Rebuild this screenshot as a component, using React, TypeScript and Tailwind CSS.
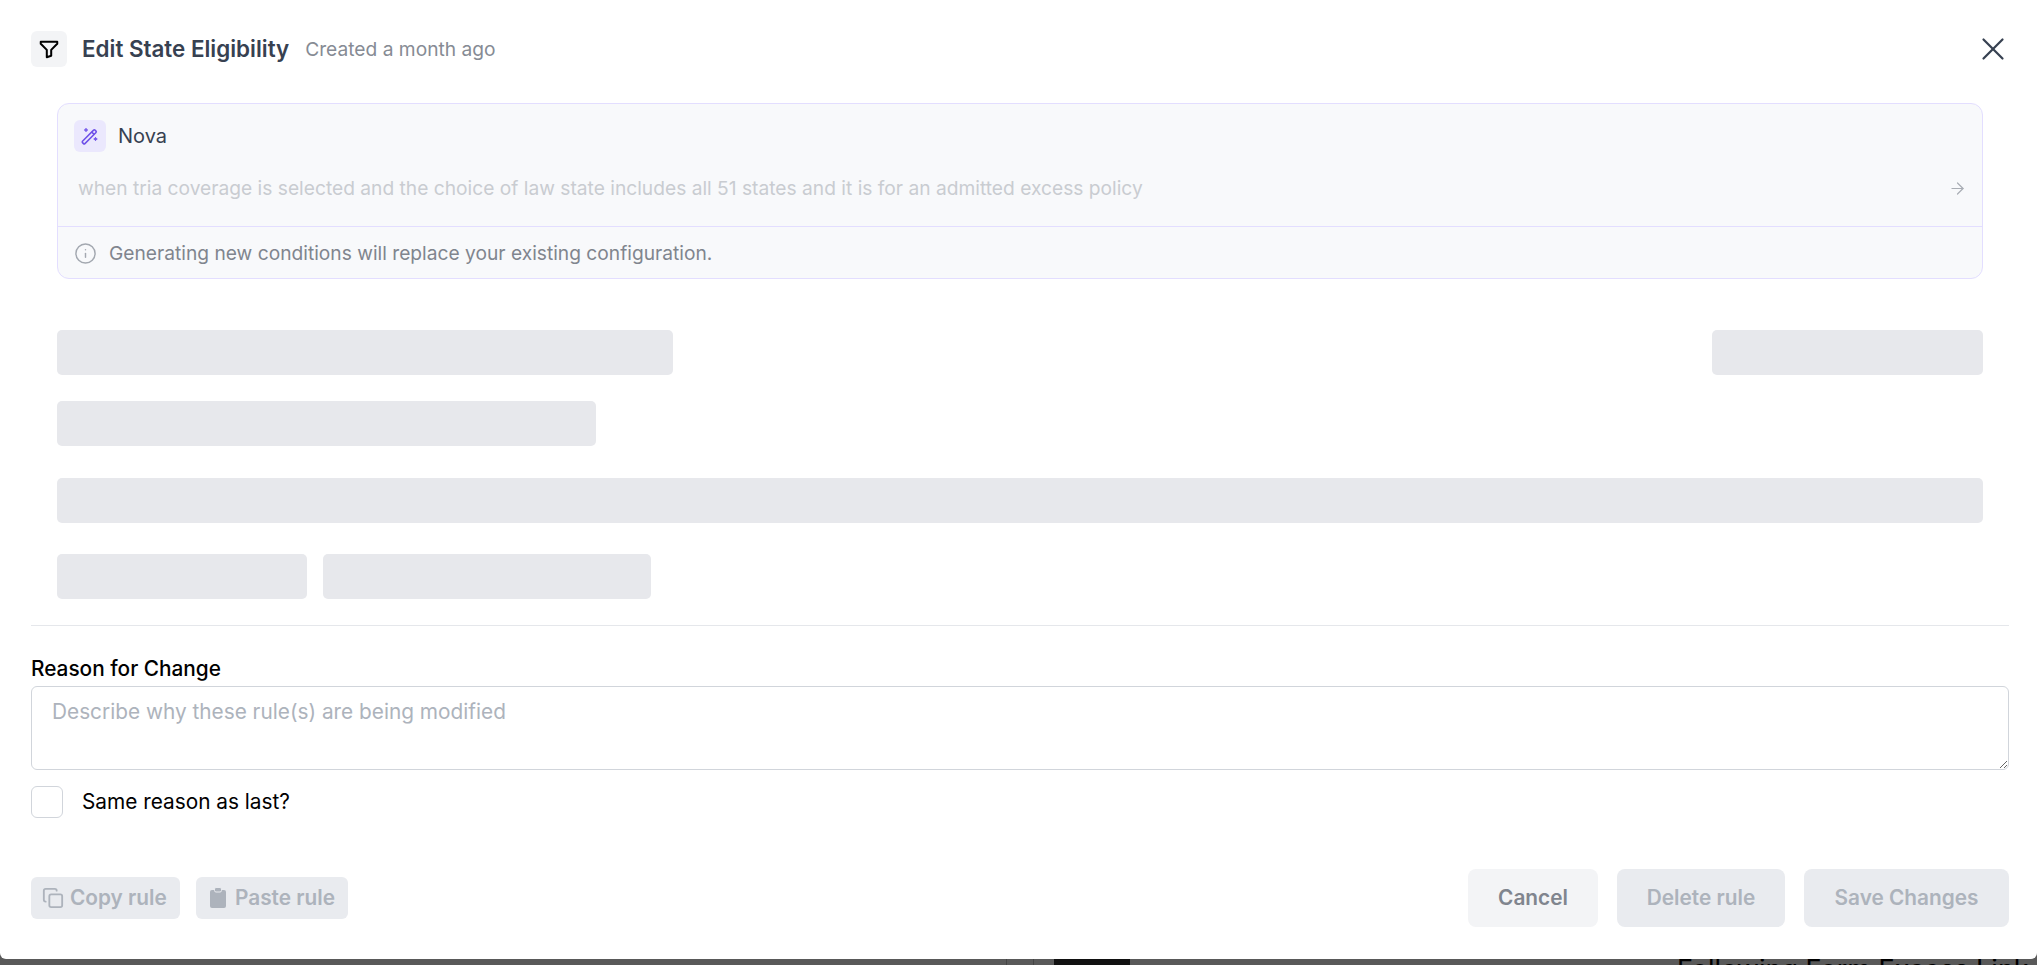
import React from "react";
import { X, ArrowRight, Info, Copy } from "lucide-react";

const font = { fontFamily: "Inter, sans-serif" };

function Skeleton({ className }: { className: string }) {
  return <div className={`h-[45px] rounded-[5px] bg-[#e7e8ec] ${className}`} />;
}

function FooterButton({ children, className }: { children: React.ReactNode; className: string }) {
  return (
    <button className={`h-[58px] rounded-lg text-[20.8px] leading-none font-semibold ${className}`}>
      {children}
    </button>
  );
}

export default function App() {
  return (
    <div style={font} className="h-[965px] overflow-hidden bg-[#595959]">
      <div className="h-[959px] rounded-b-md bg-white pl-[31px] pr-[28px]">
        <header className="flex h-[98px] items-center">
          <div className="flex h-9 w-9 items-center justify-center rounded-md bg-[#f3f4f6]">
            <svg width="22" height="22" viewBox="0 0 24 24" fill="none" stroke="#000" strokeWidth="2.2" strokeLinejoin="round" strokeLinecap="round">
              <path d="M3 4h18v2.2l-6.6 6.8v6.4L9.6 21v-8L3 6.2z" />
            </svg>
          </div>
          <h2 className="ml-[15px] text-[22.4px] font-semibold text-[#374151]">Edit State Eligibility</h2>
          <span className="ml-4 text-[19.2px] text-[#868b94]">Created a month ago</span>
          <X className="-mr-[3px] ml-auto text-[#374151]" size={38} strokeWidth={1.4} />
        </header>

        <div className="mx-[26px]">
          <section className="mt-[5px] h-[176px] rounded-xl border border-[#e3deff] bg-[#f8f9fb]">
            <div className="flex items-center pl-4 pt-4">
              <div className="flex h-8 w-8 items-center justify-center rounded-md bg-[#ebe8fd]">
                <svg width="20" height="20" viewBox="0 0 20 20" fill="none" stroke="#6d4fe8" strokeWidth="1.5" strokeLinejoin="round">
                  <path d="M2.5 15.2L13.6 4.1a1 1 0 0 1 1.4 0l1 1a1 1 0 0 1 0 1.4L4.9 17.6a1 1 0 0 1-1.4 0l-1-1a1 1 0 0 1 0-1.4z" />
                  <path d="M11.7 6l2.4 2.4" />
                  <path d="M6 2.2l.5 1.3 1.3.5-1.3.5L6 5.8l-.5-1.3-1.3-.5 1.3-.5z" fill="#6d4fe8" strokeWidth="0.8" />
                  <path d="M15.5 11.2l.5 1.3 1.3.5-1.3.5-.5 1.3-.5-1.3-1.3-.5 1.3-.5z" fill="#6d4fe8" strokeWidth="0.8" />
                </svg>
              </div>
              <span className="ml-[12px] text-[20px] text-[#374151]">Nova</span>
            </div>
            <div className="mt-[15px] flex h-[42px] items-center pl-[20px] pr-[15px]">
              <span className="text-[19.2px] text-[#c9ccd1]">
                when tria coverage is selected and the choice of law state includes all 51 states and it is for an admitted excess policy
              </span>
              <ArrowRight size={19} strokeWidth={1.5} className="ml-auto text-[#a9adb4]" />
            </div>
            <div className="mt-[17px] flex h-[51px] items-center border-t border-[#e3deff] pl-[16px] pt-[2px]">
              <Info size={23} strokeWidth={1.5} className="text-[#a3a8b0]" />
              <span className="ml-[12px] text-[19.2px] text-[#80858e]">
                Generating new conditions will replace your existing configuration.
              </span>
            </div>
          </section>

          <div className="mt-[51px] flex justify-between">
            <Skeleton className="w-[616px]" />
            <Skeleton className="w-[271px]" />
          </div>
          <Skeleton className="mt-[26px] w-[539px]" />
          <Skeleton className="mt-8 w-full" />
          <div className="mt-[31px] flex gap-4">
            <Skeleton className="w-[250px]" />
            <Skeleton className="w-[328px]" />
          </div>
        </div>

        <div className="mt-[26px] border-t border-[#e5e7eb]" />

        <label className="mt-[31px] block text-[20.8px] leading-6 font-medium text-black">Reason for Change</label>
        <textarea
          readOnly
          placeholder="Describe why these rule(s) are being modified"
          className="mt-[5px] block h-[84px] w-full rounded-md border border-[#d1d5db] bg-white px-5 py-[9px] text-[20.8px] placeholder:text-[#adb3bc]"
        />

        <div className="mt-4 flex items-center">
          <div className="h-8 w-8 rounded-md border border-[#d1d5db]" />
          <span className="ml-[19px] text-[20.8px] text-black">Same reason as last?</span>
        </div>

        <div className="mt-[51px] flex items-center justify-between">
          <div className="flex gap-4">
            <div className="flex h-[42px] w-[149px] items-center gap-[6px] rounded-md bg-[#e9ebef] pl-[11px] text-[20.8px] font-semibold text-[#adb3bc]">
              <Copy size={22} /> Copy rule
            </div>
            <div className="flex h-[42px] w-[152px] items-center gap-[7px] rounded-md bg-[#e9ebef] pl-[12px] text-[20.8px] font-semibold text-[#adb3bc]">
              <svg width="20" height="22" viewBox="0 0 20 22" fill="#adb3bc">
                <rect x="2" y="3" width="16" height="18" rx="2" />
                <rect x="6.5" y="0.5" width="7" height="4.5" rx="1.5" stroke="#e9ebef" />
              </svg>
              Paste rule
            </div>
          </div>
          <div className="flex gap-[19px]">
            <FooterButton className="w-[130px] bg-[#f3f4f6] text-[#80858e]">Cancel</FooterButton>
            <FooterButton className="w-[168px] bg-[#e9ebef] text-[#adb3bc]">Delete rule</FooterButton>
            <FooterButton className="w-[205px] bg-[#e9ebef] text-[#adb3bc]">Save Changes</FooterButton>
          </div>
        </div>
      </div>
      <div className="flex h-[6px] overflow-hidden">
        <div className="ml-[1006px] h-full w-px shrink-0 bg-[#454545]" />
        <div className="ml-[26px] h-full w-px shrink-0 bg-[#454545]" />
        <div className="ml-[20px] h-full w-[76px] shrink-0 bg-[#111]" />
        <span className="-mt-[3px] ml-[547px] shrink-0 text-[27px] leading-none whitespace-nowrap text-black">
          Following Form Excess Link
        </span>
      </div>
    </div>
  );
}
